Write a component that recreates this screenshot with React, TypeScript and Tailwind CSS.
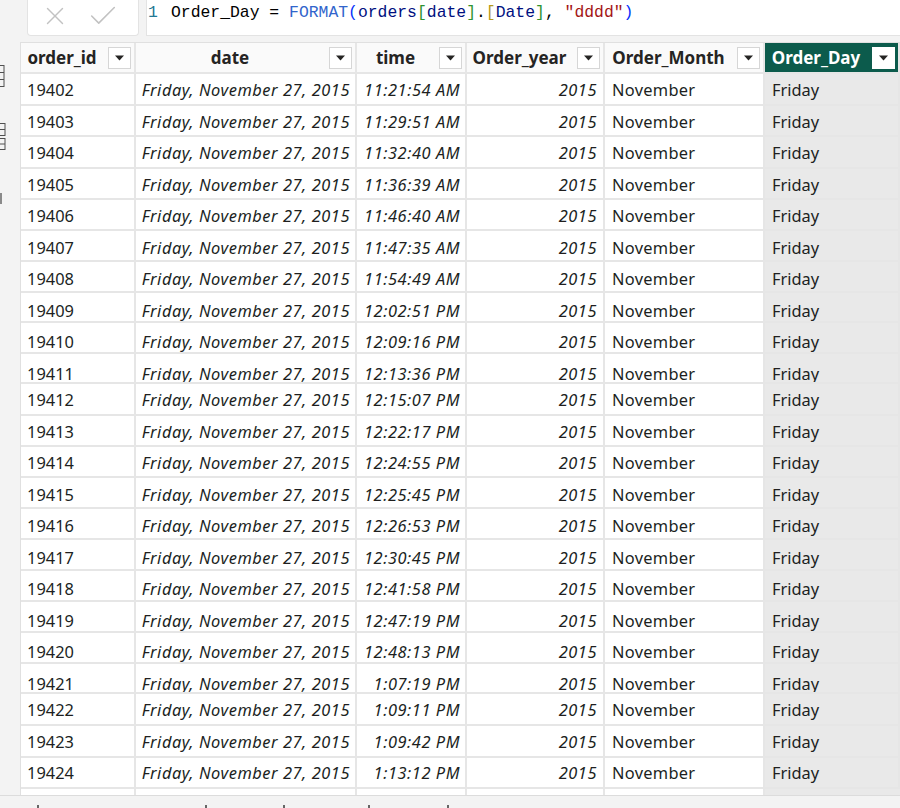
import { X, Check } from "lucide-react";

type Row = { id: string; time: string; h: 30 | 31 | 32; s: number };

const rows: Row[] = [
  { id: "19402", time: "11:21:54 AM", h: 32, s: 1 },
  { id: "19403", time: "11:29:51 AM", h: 31, s: 2 },
  { id: "19404", time: "11:32:40 AM", h: 32, s: 1 },
  { id: "19405", time: "11:36:39 AM", h: 31, s: 2 },
  { id: "19406", time: "11:46:40 AM", h: 31, s: 2 },
  { id: "19407", time: "11:47:35 AM", h: 31, s: 3 },
  { id: "19408", time: "11:54:49 AM", h: 31, s: 3 },
  { id: "19409", time: "12:02:51 PM", h: 30, s: 4 },
  { id: "19410", time: "12:09:16 PM", h: 31, s: 5 },
  { id: "19411", time: "12:13:36 PM", h: 30, s: 6 },
  { id: "19412", time: "12:15:07 PM", h: 32, s: 1 },
  { id: "19413", time: "12:22:17 PM", h: 31, s: 2 },
  { id: "19414", time: "12:24:55 PM", h: 31, s: 2 },
  { id: "19415", time: "12:25:45 PM", h: 31, s: 3 },
  { id: "19416", time: "12:26:53 PM", h: 31, s: 3 },
  { id: "19417", time: "12:30:45 PM", h: 31, s: 4 },
  { id: "19418", time: "12:41:58 PM", h: 31, s: 4 },
  { id: "19419", time: "12:47:19 PM", h: 31, s: 5 },
  { id: "19420", time: "12:48:13 PM", h: 31, s: 5 },
  { id: "19421", time: "1:07:19 PM", h: 30, s: 6 },
  { id: "19422", time: "1:09:11 PM", h: 32, s: 1 },
  { id: "19423", time: "1:09:42 PM", h: 32, s: 1 },
  { id: "19424", time: "1:13:12 PM", h: 31, s: 1 },
];

const heightCls = { 30: "h-[30px]", 31: "h-[31px]", 32: "h-[32px]" };
const shiftCls: Record<number, string> = {
  0: "translate-y-0",
  1: "translate-y-[1px]",
  2: "translate-y-[2px]",
  3: "translate-y-[3px]",
  4: "translate-y-[4px]",
  5: "translate-y-[5px]",
  6: "translate-y-[6px]",
};

const font = "font-['Segoe_UI','Noto_Sans',sans-serif]";
const ital = "italic tracking-[0.55px]";
const cell = "flex items-center h-full overflow-hidden border-r-2 border-b-2 border-[#e6e6e6]";

function Drop({ dark }: { dark?: boolean }) {
  return (
    <div
      className={`w-[23px] h-[22px] shrink-0 flex justify-center pt-[7px] bg-white border ${
        dark ? "border-white" : "border-[#d6d6d6]"
      }`}
    >
      <svg width="9" height="6" viewBox="0 0 9 6">
        <path d="M0 0.5H9L4.5 5.5Z" fill="#252423" />
      </svg>
    </div>
  );
}

function Head({ name, w, active }: { name: string; w: string; active?: boolean }) {
  return (
    <div
      className={`${w} ${cell} pr-[3px] ${
        active ? "bg-[#0c5b4c] text-white border-[#0c5b4c]" : "bg-[#fafafa] text-[#252423]"
      }`}
    >
      <span className="flex-1 text-center font-bold text-[17px] pr-[5px] whitespace-nowrap">{name}</span>
      <Drop dark={active} />
    </div>
  );
}

function DataRow({ r }: { r: Row }) {
  const t = shiftCls[r.s];
  return (
    <div className={`flex ${heightCls[r.h]} text-[16.4px] text-[#201f1e]`}>
      <div className={`w-[115px] ${cell} bg-white pl-[6px]`}>
        <span className={t}>{r.id}</span>
      </div>
      <div className={`w-[221px] ${cell} bg-white justify-end pr-[5px] ${ital}`}>
        <span className={`${t} whitespace-nowrap`}>Friday, November 27, 2015</span>
      </div>
      <div className={`w-[110px] ${cell} bg-white justify-end pr-[5px] ${ital}`}>
        <span className={`${t} whitespace-nowrap`}>{r.time}</span>
      </div>
      <div className={`w-[138px] ${cell} bg-white justify-end pr-[6px] ${ital}`}>
        <span className={t}>2015</span>
      </div>
      <div className={`w-[160px] ${cell} bg-white pl-[7px] tracking-[0.3px]`}>
        <span className={t}>November</span>
      </div>
      <div className={`flex-1 ${cell} bg-[#e9e9e9] border-[#dedede] pl-[7px]`}>
        <span className={t}>Friday</span>
      </div>
    </div>
  );
}

export default function App() {
  return (
    <div className={`w-[900px] h-[808px] overflow-hidden bg-[#f3f3f3] flex flex-col ${font}`}>
      {/* formula bar */}
      <div className="h-[36px] flex shrink-0">
        <div className="w-[27px]" />
        <div className="w-[112px] bg-white border border-t-0 border-[#e3e3e3] rounded-b-[4px] flex items-start pt-[1px] pl-[12px] gap-[16px]">
          <X size={30} strokeWidth={1.1} className="text-[#c2c2c2]" />
          <Check size={34} strokeWidth={1.1} className="text-[#c2c2c2] -mt-[2px]" />
        </div>
        <div className="w-[7px]" />
        <div className="flex-1 bg-white border-l border-b border-[#e3e3e3] flex items-start pt-[1px] font-['Liberation_Mono','DejaVu_Sans_Mono',monospace] text-[16.4px] whitespace-pre">
          <span className="w-[24px] text-[#237893] pl-[1px]">1</span>
          <span className="text-black">
            Order_Day = <span className="text-[#3165cc]">FORMAT</span>
            <span className="text-[#0431fa]">(</span>
            <span className="text-[#001080]">orders</span>
            <span className="text-[#319331]">[</span>
            <span className="text-[#001080]">date</span>
            <span className="text-[#319331]">]</span>.<span className="text-[#b79a1a]">[</span>
            <span className="text-[#001080]">Date</span>
            <span className="text-[#319331]">]</span>,{" "}
            <span className="text-[#a31515]">"dddd"</span>
            <span className="text-[#0431fa]">)</span>
          </span>
        </div>
      </div>

      <div className="flex flex-1 min-h-0">
        {/* left rail, icons cut off at the edge */}
        <div className="w-[20px] shrink-0 flex flex-col pt-[29px]">
          <svg width="20" height="23" viewBox="0 0 20 23">
            <rect x="-10" y="0.5" width="14" height="21" fill="none" stroke="#505050" />
            <path d="M-10 7.5H4M-10 14.5H4" stroke="#505050" />
          </svg>
          <svg width="20" height="28" viewBox="0 0 20 28" className="mt-[35px]">
            <rect x="-6" y="0.5" width="11" height="12" fill="none" stroke="#505050" />
            <path d="M-6 6.5H5" stroke="#505050" />
            <rect x="-6" y="15.5" width="11" height="11" fill="none" stroke="#505050" />
            <path d="M-6 21H5" stroke="#505050" />
          </svg>
          <svg width="20" height="12" viewBox="0 0 20 12" className="mt-[42px]">
            <rect x="0" y="0" width="2" height="11" fill="#8a8a8a" />
          </svg>
        </div>

        {/* table */}
        <div className="flex-1 flex flex-col pt-[6px] min-w-0">
          <div className="flex-1 flex flex-col border-l border-t border-[#e0e0e0] overflow-hidden">
            <div className="flex h-[31px] shrink-0">
              <Head name="order_id" w="w-[115px]" />
              <Head name="date" w="w-[221px]" />
              <Head name="time" w="w-[110px]" />
              <Head name="Order_year" w="w-[138px]" />
              <Head name="Order_Month" w="w-[160px]" />
              <Head name="Order_Day" w="flex-1" active />
            </div>
            {rows.map((r) => (
              <DataRow key={r.id} r={r} />
            ))}
            <div className="flex flex-1">
              <div className="w-[115px] border-r-2 border-[#e6e6e6] bg-white" />
              <div className="w-[221px] border-r-2 border-[#e6e6e6] bg-white" />
              <div className="w-[110px] border-r-2 border-[#e6e6e6] bg-white" />
              <div className="w-[138px] border-r-2 border-[#e6e6e6] bg-white" />
              <div className="w-[160px] border-r-2 border-[#e6e6e6] bg-white" />
              <div className="flex-1 bg-[#e9e9e9]" />
            </div>
          </div>
        </div>
      </div>

      {/* status bar, only the tops of its text show */}
      <div className="h-[13px] shrink-0 border-t border-[#dcdcdc] flex items-end text-[#555]">
        <div className="flex items-end h-[3px]">
          <span className="ml-[37px] w-[2px] h-[3px] bg-[#666]" />
          <span className="ml-[166px] w-[2px] h-[3px] bg-[#666]" />
          <span className="ml-[76px] w-[2px] h-[3px] bg-[#666]" />
          <span className="ml-[83px] w-[2px] h-[3px] bg-[#666]" />
          <span className="ml-[77px] w-[2px] h-[3px] bg-[#666]" />
        </div>
      </div>
    </div>
  );
}
